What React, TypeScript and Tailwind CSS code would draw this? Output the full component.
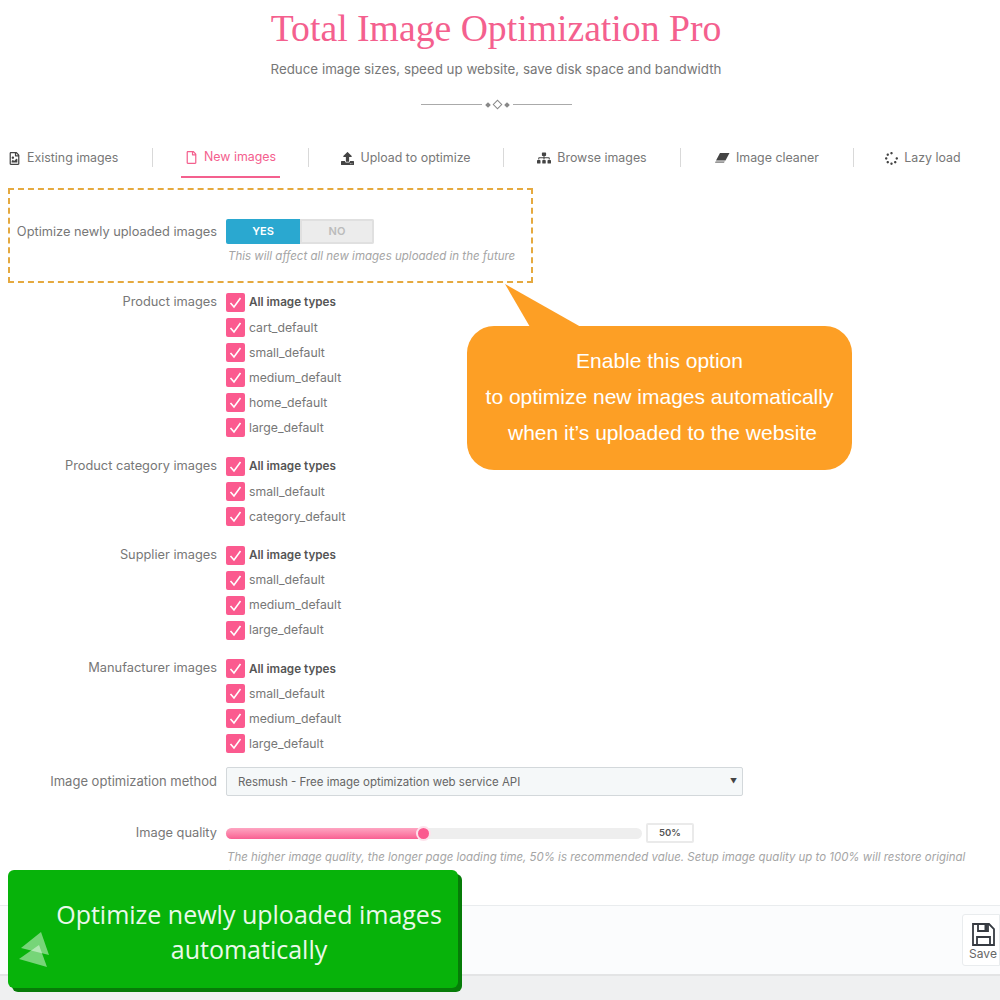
import { FaRegFile, FaRegFileImage, FaSitemap, FaSpinner, FaUpload } from 'react-icons/fa';

const Eraser = () => (
  <svg width="15" height="12" viewBox="0 0 15 12" fill="currentColor">
    <path d="M5 1 H14.5 L10.5 8.5 H1 Z" />
    <path d="M0.6 9.3 H9.8 L9 11 H0 Z" fillOpacity="0.55" />
  </svg>
);

const tabs = [
  { label: 'Existing images', icon: <FaRegFileImage size={13} />, width: 'w-[152px] justify-start pl-[4px]' },
  { label: 'New images', icon: <FaRegFile size={13} />, width: 'w-[155px] justify-center', active: true },
  { label: 'Upload to optimize', icon: <FaUpload size={13} />, width: 'w-[194px] justify-center' },
  { label: 'Browse images', icon: <FaSitemap size={14} />, width: 'w-[176px] justify-center' },
  { label: 'Image cleaner', icon: <Eraser />, width: 'w-[172px] justify-center' },
  { label: 'Lazy load', icon: <FaSpinner size={13} />, width: 'w-[138px] justify-center' },
];

const groups = [
  { label: 'Product images', items: ['cart_default', 'small_default', 'medium_default', 'home_default', 'large_default'] },
  { label: 'Product category images', items: ['small_default', 'category_default'] },
  { label: 'Supplier images', items: ['small_default', 'medium_default', 'large_default'] },
  { label: 'Manufacturer images', items: ['small_default', 'medium_default', 'large_default'] },
];

function Check({ label, bold }: { label: string; bold?: boolean }) {
  return (
    <div className="flex h-[25px] items-center gap-[4px]">
      <div className="flex h-[19px] w-[19px] items-center justify-center rounded-[2px] bg-[#fb5a8f]">
        <svg width="15" height="15" viewBox="0 0 15 15" fill="none" stroke="white" strokeWidth="1.6">
          <path d="M2.5 8 L6 12 L12.5 3" />
        </svg>
      </div>
      <span className={bold ? 'pt-px text-[11.7px] font-semibold text-[#555]' : 'pt-px text-[12.25px] text-[#777]'}>{label}</span>
    </div>
  );
}

export default function App() {
  return (
    <div className="relative h-[1000px] w-[1000px] overflow-hidden bg-white font-['Inter',sans-serif]">
      <div className="flex w-[992px] flex-col items-center pt-[6px]">
        <h1 className="font-['Liberation_Serif',serif] text-[37.7px] leading-[44px] text-[#f4608e]">Total Image Optimization Pro</h1>
        <p className="mt-[10px] text-[13.35px] leading-[18px] text-[#777]">Reduce image sizes, speed up website, save disk space and bandwidth</p>
        <div className="mt-[23px] flex items-center gap-[4px]">
          <div className="h-px w-[61px] bg-[#aaa]" />
          <div className="h-[4px] w-[4px] rotate-45 bg-[#888]" />
          <div className="h-[7px] w-[7px] rotate-45 border border-[#888]" />
          <div className="h-[4px] w-[4px] rotate-45 bg-[#888]" />
          <div className="h-px w-[59px] bg-[#aaa]" />
        </div>
      </div>

      <div className="mt-[30px] flex h-[40px] items-start">
        {tabs.map((t, i) => (
          <div key={t.label} className="flex">
            <div className={`flex h-[40px] ${t.width}`}>
              <div className={`flex h-[40px] items-center gap-[6px] px-[4px] text-[12.4px] ${t.active ? 'border-b-2 border-[#f4608e] text-[#f4608e]' : 'text-[#777]'}`}>
                <span className={t.active ? 'text-[#f4608e]' : 'text-[#444]'}>{t.icon}</span>
                {t.label}
              </div>
            </div>
            {i < tabs.length - 1 && <div className="mt-[10px] h-[19px] w-px bg-[#d9d9d9]" />}
          </div>
        ))}
      </div>

      <div className="ml-[8px] mt-[10px] h-[95px] w-[525px] border-2 border-dashed border-[#e5a93f]">
        <div className="mt-[29px] flex">
          <div className="flex h-[25px] w-[207px] items-center justify-end text-[12.8px] text-[#777]">Optimize newly uploaded images</div>
          <div className="ml-[9px]">
            <div className="flex h-[25px] w-[148px] overflow-hidden rounded-[2px] text-[11px] font-semibold">
              <div className="flex w-[74px] items-center justify-center bg-[#2aa8d0] text-white">YES</div>
              <div className="flex w-[74px] items-center justify-center border-2 border-[#e0e0e0] bg-[#ececec] text-[#bbb]">NO</div>
            </div>
            <p className="mt-[4px] pl-[2px] text-[11.5px] italic leading-[16px] text-[#a5a5a5]">This will affect all new images uploaded in the future</p>
          </div>
        </div>
      </div>

      <div className="mt-[7px] flex flex-col gap-[13.8px]">
        {groups.map((g) => (
          <div key={g.label} className="flex">
            <div className="w-[217px] pt-[3px] text-right text-[12.8px] leading-[18px] text-[#777]">{g.label}</div>
            <div className="ml-[9px]">
              <Check label="All image types" bold />
              {g.items.map((it) => (
                <Check key={it} label={it} />
              ))}
            </div>
          </div>
        ))}
      </div>

      <div className="mt-[11px] flex items-center">
        <div className="w-[217px] text-right text-[13px] text-[#777]">Image optimization method</div>
        <div className="ml-[9px] flex h-[29px] w-[517px] items-center justify-between rounded-[2px] border border-[#d3d8db] bg-[#f5f8f9] pl-[11px] pr-[5px] text-[11.5px] text-[#666]">
          <span className="pt-[2px]">Resmush - Free image optimization web service API</span>
          <span className="text-[7px] text-[#444]">▼</span>
        </div>
      </div>

      <div className="mt-[26px] flex">
        <div className="w-[217px] pt-[2px] text-right text-[12.8px] leading-[18px] text-[#777]">Image quality</div>
        <div className="ml-[9px]">
          <div className="flex h-[22px] items-center">
            <div className="relative h-[11px] w-[416px] rounded-full bg-[#eeeeee]">
              <div className="h-[11px] w-[197px] rounded-full bg-gradient-to-b from-[#fda5c2] to-[#f85f92]" />
              <div className="absolute left-[190px] top-[-2px] h-[15px] w-[15px] rounded-full border-2 border-[#fde3ec] bg-[#fb5a8f]" />
            </div>
            <div className="ml-[4px] flex h-[20px] w-[48px] items-center justify-center rounded-[2px] border-2 border-[#eaeaea] bg-white text-[9.5px] font-semibold text-[#555]">50%</div>
          </div>
          <p className="mt-[4px] w-[745px] pl-px text-[11.45px] italic leading-[18px] text-[#a5a5a5]">The higher image quality, the longer page loading time, 50% is recommended value. Setup image quality up to 100% will restore original image</p>
        </div>
      </div>

      <div className="absolute left-0 top-[905px] flex h-[71px] w-full justify-end border-t border-b-2 border-t-[#e9ecee] border-b-[#e3e4e5] bg-[#fbfcfd] pt-[8px]">
        <div className="flex h-[52px] w-[38px] flex-col items-center rounded-l-[3px] border border-[#e9ecee] bg-white pl-[4px] pt-[8px] text-[12px] leading-[16px] text-[#666]">
          <svg width="23" height="23" viewBox="0 0 23 23" fill="none" stroke="#363a41" strokeWidth="1.8">
            <path d="M1 1 H17 L22 6 V22 H1 Z" />
            <path d="M6 1 V8 H16 V1" />
            <path d="M12.5 2 H15.5 V7 H12.5 Z" fill="#363a41" stroke="none" />
            <path d="M5 22 V14 H18 V22" />
          </svg>
          Save
        </div>
      </div>
      <div className="absolute left-0 top-[976px] h-[24px] w-full bg-[#eff0f1]" />

      <div className="absolute left-[467px] top-[326px] flex h-[144px] w-[385px] flex-col items-center rounded-[27px] bg-[#fd9f25] pt-[17px] font-['Liberation_Sans',sans-serif] text-[21px] leading-[36px] text-white">
        <svg className="absolute left-[36px] top-[-42px]" width="78" height="43" viewBox="0 0 78 43" fill="#fd9f25">
          <path d="M2 0 L78 43 L27 43 Z" />
        </svg>
        <div>Enable this option</div>
        <div>to optimize new images automatically</div>
        <div className="pl-[6px]">when it’s uploaded to the website</div>
      </div>

      <div className="absolute left-[8px] top-[870px] flex h-[118px] w-[450px] flex-col items-center justify-center rounded-[6px] bg-[#07b30a] pl-[32px] pt-[6px] font-['Open_Sans',sans-serif] text-[25px] leading-[35px] text-[#eaf9ea] shadow-[4px_4px_0_#067c08]">
        <div>Optimize newly uploaded images</div>
        <div>automatically</div>
        <svg className="absolute left-[10px] top-[59px]" width="34" height="40" viewBox="0 0 34 40">
          <path d="M23 3 L31 26 L3 19 Z" fill="#ffffff" fillOpacity="0.45" />
          <path d="M21 16 L29 38 L1 30 Z" fill="#ffffff" fillOpacity="0.45" />
        </svg>
      </div>
    </div>
  );
}
